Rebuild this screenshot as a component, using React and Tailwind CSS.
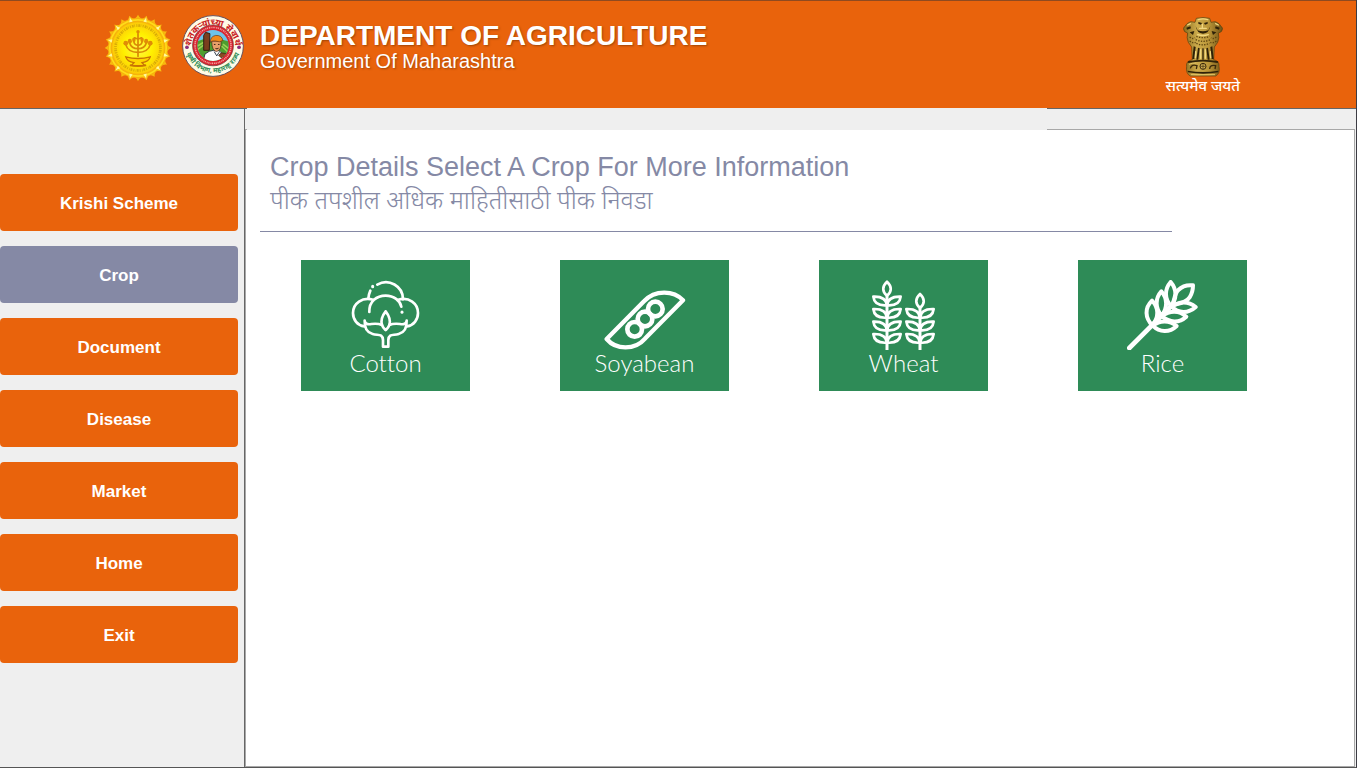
import React from "react";

const RAY_ANGLES = Array.from({ length: 24 }, (_, i) => i * 15);

function StateSeal() {
  return (
    <svg viewBox="0 0 200 200" className="size-[68px] shrink-0" role="img" aria-label="Maharashtra state seal">
      <defs>
        <radialGradient id="sealGlow">
          <stop offset="0" stopColor="#fff84a" />
          <stop offset="0.55" stopColor="#fff000" />
          <stop offset="1" stopColor="#fcc808" />
        </radialGradient>
      </defs>
      {RAY_ANGLES.map((a) => (
        <path key={a} d="M100 2 Q103 10 113 16 L87 16 Q97 10 100 2Z" fill="#f8b90f" transform={`rotate(${a} 100 100)`} />
      ))}
      <circle cx="100" cy="100" r="88" fill="#f7b00c" />
      <circle cx="100" cy="100" r="83" fill="none" stroke="#ffdc1a" strokeWidth="5" />
      {RAY_ANGLES.filter((a) => a % 30 === 0).map((a) => (
        <path key={a} d="M100 7 L105 21 L95 21Z" fill="#fff9a0" transform={`rotate(${a + 15} 100 100)`} />
      ))}
      <circle cx="100" cy="100" r="77" fill="url(#sealGlow)" stroke="#f5b40a" strokeWidth="2" />
      <circle cx="100" cy="100" r="66" fill="none" stroke="#c99a08" strokeWidth="8" strokeDasharray="3 3 5 2 2 4" opacity="0.7" />
      <g fill="none" stroke="#d98a05" strokeWidth="5" strokeLinecap="round">
        <path d="M100 58V124" />
        <path d="M64 90Q70 112 100 113Q130 112 136 90" />
        <path d="M76 86Q80 102 100 102Q120 102 124 86" />
        <path d="M88 82Q90 92 100 92Q110 92 112 82" />
        <path d="M90 70Q100 76 110 70" />
      </g>
      <g fill="#e08c06">
        <circle cx="100" cy="52" r="5" />
        <ellipse cx="64" cy="86" rx="7" ry="7" />
        <ellipse cx="76" cy="80" rx="6" ry="7" />
        <ellipse cx="88" cy="76" rx="5" ry="7" />
        <ellipse cx="112" cy="76" rx="5" ry="7" />
        <ellipse cx="124" cy="80" rx="6" ry="7" />
        <ellipse cx="136" cy="86" rx="7" ry="7" />
      </g>
      <path d="M64 126Q100 136 136 126Q132 140 112 143L120 152H80L88 143Q68 140 64 126Z" fill="#ffd500" stroke="#c97404" strokeWidth="4" />
      <path d="M76 150Q100 158 124 150" fill="none" stroke="#c97404" strokeWidth="4" />
    </svg>
  );
}

function FarmerSeal() {
  return (
    <svg viewBox="0 0 200 200" className="size-[62px] shrink-0" role="img" aria-label="Department of Agriculture seal">
      <defs>
        <path id="sealTop" d="M29 104A71 71 0 0 1 171 104" />
        <path id="sealBottom" d="M10 96A90 90 0 0 0 190 96" />
        <clipPath id="sealScene">
          <circle cx="100" cy="98" r="50" />
        </clipPath>
      </defs>
      <circle cx="100" cy="100" r="98" fill="#fffbe6" stroke="#5d4a5a" strokeWidth="3" />
      <circle cx="100" cy="98" r="66" fill="#d8232f" stroke="#5a3030" strokeWidth="2" />
      <circle cx="100" cy="98" r="58" fill="none" stroke="#f3a3a0" strokeWidth="5" strokeDasharray="3 3 4 2" />
      <g clipPath="url(#sealScene)">
        <rect x="48" y="46" width="104" height="104" fill="#6dc3ea" />
        <path d="M48 86L68 78L95 86L125 78L152 86V150H48Z" fill="#4f9d2e" />
        <path d="M50 100L70 88M50 112L74 94M132 94L150 108M128 100L150 122" stroke="#9ad255" strokeWidth="5" />
        <path d="M70 66L76 56L90 60L88 114H70Z" fill="#7a3f1e" stroke="#2e1a10" strokeWidth="3" />
        <path d="M68 150L74 126Q88 114 102 114L116 114Q134 120 138 150Z" fill="#ffffff" stroke="#27323f" strokeWidth="3" />
        <path d="M96 84Q96 114 110 118Q128 116 126 84Z" fill="#e9a06a" stroke="#3b2217" strokeWidth="2" />
        <path d="M92 88Q90 70 108 66Q128 64 132 82Q122 90 108 84Q98 82 92 88Z" fill="#f08a1c" stroke="#5b2a10" strokeWidth="2" />
        <path d="M103 95H108M116 95H121M108 108Q113 111 118 107" stroke="#2d1b12" strokeWidth="3" fill="none" />
        <path d="M118 130Q126 118 140 124L150 132L142 142L126 138Z" fill="#8b4a22" stroke="#2e1a10" strokeWidth="2" />
        <path d="M104 118L112 132L120 120" fill="none" stroke="#27323f" strokeWidth="3" />
      </g>
      <circle cx="16" cy="104" r="6" fill="#8b2c7c" />
      <circle cx="184" cy="104" r="6" fill="#8b2c7c" />
      <text fontFamily="Noto Sans, Noto Sans Devanagari, sans-serif" fontSize="29" fontWeight="700" fill="#c8201f" textAnchor="middle">
        <textPath href="#sealTop" startOffset="50%">शेतकऱ्यांच्या सेवार्थ</textPath>
      </text>
      <text fontFamily="Noto Sans, Noto Sans Devanagari, sans-serif" fontSize="22" fontWeight="700" fill="#2d8c57" textAnchor="middle">
        <textPath href="#sealBottom" startOffset="50%">कृषी विभाग, महाराष्ट्र राज्य</textPath>
      </text>
    </svg>
  );
}

function LionCapital() {
  return (
    <svg viewBox="0 0 120 180" className="h-[60px] w-10" role="img" aria-label="State Emblem of India">
      <defs>
        <linearGradient id="gold" x1="0" x2="1">
          <stop offset="0" stopColor="#8a6a1c" />
          <stop offset="0.35" stopColor="#cdac4c" />
          <stop offset="0.65" stopColor="#b99538" />
          <stop offset="1" stopColor="#6f5114" />
        </linearGradient>
      </defs>
      <path
        d="M40 4Q60 -1 80 4L84 16Q98 10 108 20L119 34Q118 46 106 48Q110 62 104 76L94 90L92 128Q110 132 108 148Q112 170 98 177H22Q8 170 11 148Q8 132 28 128L26 90L16 76Q10 62 14 48Q2 46 1 34L12 20Q22 10 36 16Z"
        fill="url(#gold)"
        stroke="#54400f"
        strokeWidth="2"
      />
      <g fill="#2e2108">
        <path d="M38 28Q42 50 60 50Q78 50 82 28L76 40Q60 46 44 40Z" />
        <path d="M46 15L57 18L54 23L46 20ZM74 15L63 18L66 23L74 20Z" />
        <path d="M10 32L22 28L24 34L12 38ZM110 32L98 28L96 34L108 38Z" />
        <path d="M20 46L34 42L30 54ZM100 46L86 42L90 54Z" />
        <path d="M32 88L38 90L34 126H28ZM45 92L50 94L46 128H40ZM58 94H62V128H58ZM75 92L70 94L74 128H80ZM88 88L82 90L86 126H92Z" />
        <path d="M14 133Q60 123 106 133L104 138Q60 129 16 138ZM14 161Q60 169 106 161V166Q60 174 15 166Z" />
      </g>
      <g fill="none" stroke="#5d4410" strokeWidth="4" strokeDasharray="4 4">
        <path d="M20 60Q30 68 36 62M100 60Q90 68 84 62M20 72Q30 80 38 76M100 72Q90 80 82 76M40 58Q60 66 80 58M38 68Q60 78 82 68M40 79Q60 88 80 79" />
      </g>
      <g fill="none" stroke="#f0d780" strokeWidth="4" strokeLinecap="round">
        <path d="M46 8Q60 3 74 8M58 22V32M50 34H70M14 24L22 20M106 24L98 20M44 53Q60 58 76 53M53 98V124M67 98V124M38 104L37 122M82 104L83 122" />
      </g>
      <circle cx="60" cy="148" r="9" fill="#d2b155" stroke="#3c2a0b" strokeWidth="3" />
      <path d="M60 140V156M52 148H68" stroke="#3c2a0b" strokeWidth="2" />
      <path d="M22 154Q26 140 42 146L40 156M80 156Q80 142 98 146L96 156" fill="none" stroke="#3c2a0b" strokeWidth="4" />
      <path d="M24 173H96M18 142Q26 138 40 138" stroke="#e3c667" strokeWidth="3" fill="none" />
    </svg>
  );
}

function CottonIcon() {
  return (
    <svg viewBox="2 0 210 210" className="size-[70px]" fill="none" stroke="currentColor" strokeWidth="8" strokeLinecap="round" strokeLinejoin="round" aria-hidden="true">
      <path d="M81 14A51 51 0 0 1 158 58" />
      <path d="M67 19V20" strokeWidth="9" />
      <path d="M60 32Q55 43 54 56" />
      <path d="M57 96C56 64 79 47 106 47C131 47 149 62 153 80" />
      <path d="M155 96V97" strokeWidth="9" />
      <path d="M68 59C36 50 8 70 8 99C8 119 21 136 42 139" />
      <path d="M144 59C176 50 203 70 203 99C203 119 190 136 170 139" />
      <path d="M43 122C44 132 52 134 63 132C78 130 88 132 95 135C99 146 104 148 106 150C108 148 113 146 117 135C124 132 134 130 149 132C160 134 168 132 169 122C170 146 162 158 145 162C128 167 116 160 114 180V200H98V180C96 160 84 167 67 162C50 158 42 146 43 122Z" />
      <path d="M106 94C95 108 91 122 95 135M106 94C117 108 121 122 117 135" />
    </svg>
  );
}

function SoyabeanIcon() {
  return (
    <svg viewBox="0 0 246 180" className="h-[60px] w-[82px]" fill="none" stroke="currentColor" strokeWidth="13" strokeLinejoin="round" aria-hidden="true">
      <path d="M8 147L120 34C153 -1 209 1 237 31L124 145C92 182 36 180 8 147Z" />
      <circle cx="92" cy="118" r="22" strokeWidth="14" />
      <circle cx="123" cy="87" r="22" strokeWidth="14" />
      <circle cx="154" cy="57" r="22" strokeWidth="14" />
    </svg>
  );
}

const LEAF_PAIR = "M0 0C-2 -18 -14 -27 -41 -26C-39 -7 -26 2 0 0ZM0 0C2 -18 14 -27 41 -26C39 -7 26 2 0 0Z";
const BUD = "M0 0C-15 -12 -15 -28 0 -42C15 -28 15 -12 0 0Z";

function WheatIcon() {
  return (
    <svg viewBox="1 0 198 210" className="h-[70px] w-[66px]" fill="none" stroke="currentColor" strokeWidth="8" strokeLinejoin="round" aria-hidden="true">
      <path d="M49 46V210M148 84V210" strokeWidth="9" />
      <path d={BUD} transform="translate(49 47)" />
      <path d={BUD} transform="translate(148 84)" />
      {[76, 113, 151, 188].map((y) => (
        <path key={y} d={LEAF_PAIR} transform={`translate(49 ${y})`} />
      ))}
      {[113, 151, 188].map((y) => (
        <path key={y} d={LEAF_PAIR} transform={`translate(148 ${y})`} />
      ))}
    </svg>
  );
}

function RiceIcon() {
  return (
    <svg viewBox="0 0 213 210" className="h-[70px] w-[71px]" fill="none" stroke="currentColor" strokeWidth="12" strokeLinecap="round" strokeLinejoin="round" aria-hidden="true">
      <path d="M7 204L134 77" strokeWidth="14" />
      <path d="M76 136C54 114 52 84 75 62C96 84 96 112 76 136Z" />
      <path d="M104 107C84 84 84 55 103 34C122 55 122 84 104 107Z" />
      <path d="M132 78C112 56 112 28 131 6C150 28 150 56 132 78Z" />
      <path d="M134 77C144 73 178 70 188 52C197 38 198 26 198 16C180 14 166 18 154 30C140 44 144 62 134 77Z" />
      <path d="M134 80C156 63 184 63 206 81C184 101 154 101 134 80Z" />
      <path d="M105 109C128 91 156 91 178 110C156 130 128 128 105 109Z" />
      <path d="M77 137C99 120 127 120 149 138C127 159 98 158 77 137Z" />
    </svg>
  );
}

const NAV_ITEMS = ["Krishi Scheme", "Crop", "Document", "Disease", "Market", "Home", "Exit"];

const CROPS = [
  { name: "Cotton", Icon: CottonIcon },
  { name: "Soyabean", Icon: SoyabeanIcon },
  { name: "Wheat", Icon: WheatIcon },
  { name: "Rice", Icon: RiceIcon },
];

function Header() {
  return (
    <header className="flex h-[109px] items-start justify-between border-t border-b border-t-[#8f4a20] border-b-[#666666] bg-[#e9630c] pr-4 pl-[104px] text-white lg:pr-[116px]">
      <div className="flex pt-[13px]">
        <StateSeal />
        <div className="ml-[10px] pt-px">
          <FarmerSeal />
        </div>
        <div className="ml-4 pt-[6px] [text-shadow:1px_1px_2px_rgba(90,40,0,0.5)]">
          <h1 className="text-[28px] leading-8 font-bold">DEPARTMENT OF AGRICULTURE</h1>
          <p className="text-xl leading-[18px]">Government Of Maharashtra</p>
        </div>
      </div>
      <div className="flex flex-col items-center pt-4">
        <LionCapital />
        <p className="font-['Noto_Sans','Noto_Sans_Devanagari',sans-serif] text-[15px] leading-4 font-medium">सत्यमेव जयते</p>
      </div>
    </header>
  );
}

function Sidebar({ active }) {
  return (
    <nav className="w-[245px] shrink-0 border-r border-[#666666] bg-[#efefef] pt-[65px] pr-[6px]">
      <ul className="flex flex-col gap-[15px]">
        {NAV_ITEMS.map((item) => (
          <li key={item}>
            <button
              type="button"
              className={`h-[57px] w-full rounded-[4px] pt-[2px] text-[17px] font-bold text-white ${
                item === active ? "bg-[#8589a5]" : "bg-[#e9630c]"
              }`}
            >
              {item}
            </button>
          </li>
        ))}
      </ul>
    </nav>
  );
}

export default function App() {
  return (
    <div className="flex min-h-screen flex-col border-r border-b border-r-[#3c3c44] border-b-[#555555] bg-[#efefef] font-['Liberation_Sans',Arial,sans-serif]">
      <Header />
      <div className="flex flex-1">
        <Sidebar active="Crop" />
        <div className="relative flex min-w-0 flex-1 flex-col pt-5 pr-px">
          <div className="absolute -top-px left-[2px] h-[22px] w-[800px] max-w-full bg-[#efefef]" />
          <main className="flex-1 border border-[#a8a8a8] bg-white pt-[21px] pl-[14px]">
            <h2 className="pl-[10px] text-[27px] leading-8 text-[#8589a5]">Crop Details Select A Crop For More Information</h2>
            <p className="pl-[10px] font-['Noto_Sans','Noto_Sans_Devanagari',sans-serif] text-[25px] leading-8 font-light text-[#8589a5]">
              पीक तपशील अधिक माहितीसाठी पीक निवडा
            </p>
            <hr className="mt-4 max-w-[912px] border-[#8589a5]" />
            <div className="mt-7 flex flex-wrap gap-x-[90px] gap-y-8 pl-[41px]">
              {CROPS.map(({ name, Icon }) => (
                <button
                  key={name}
                  type="button"
                  className="flex h-[131px] w-[169px] flex-col items-center justify-end bg-[#2e8b57] pb-4 text-white"
                >
                  <Icon />
                  <span className="font-['Century_Gothic',Lato,sans-serif] text-2xl leading-[25px] font-light [font-variant-ligatures:none]">{name}</span>
                </button>
              ))}
            </div>
          </main>
        </div>
      </div>
    </div>
  );
}
